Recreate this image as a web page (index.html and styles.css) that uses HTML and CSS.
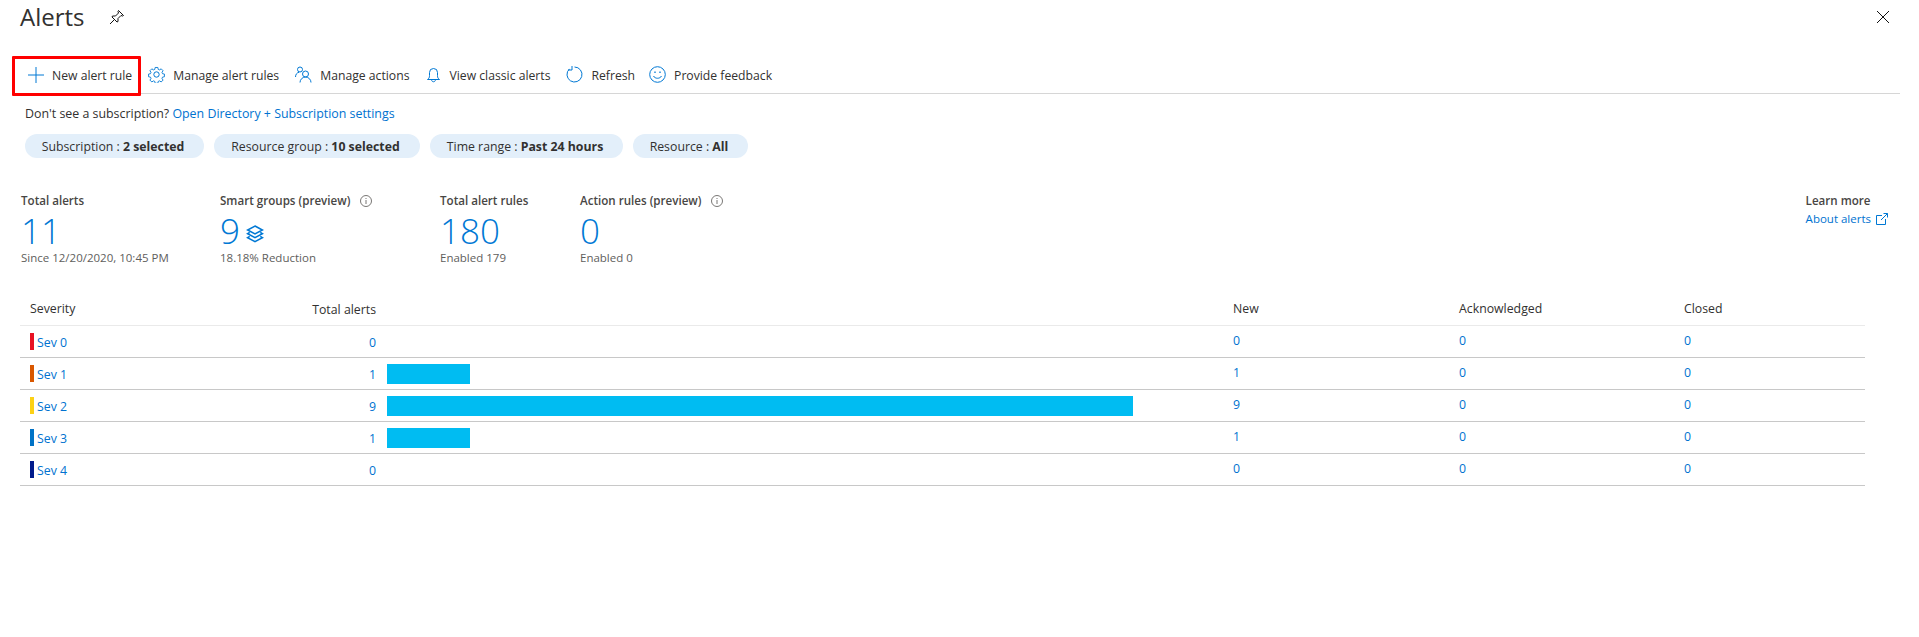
FILE: index.html
```html
<!DOCTYPE html>
<html lang="en">

<head>
    <meta charset="UTF-8">
    <title>Alerts</title>
    <link rel="stylesheet" href="styles.css">
</head>

<body>

    <div class="header">
        <h1>Alerts</h1>
        <svg class="pin" width="16" height="16" viewBox="0 0 16 16" fill="none" stroke="#111" stroke-width="1">
            <path d="M9.500 1.500 14.500 6.500 13.500 7 12 6.500 9 9.500 9 12.500 8 13 3 8 3.500 7 6.500 7 9.500 4 9 2.500Z" />
            <path d="M5.500 10.500 1 15" />
        </svg>
        <svg class="close" width="14" height="14" viewBox="0 0 14 14" stroke="#111" stroke-width="1">
            <path d="M1 1 13 13M13 1 1 13" />
        </svg>
    </div>

    <div class="toolbar">
        <div class="tool tool-new">
            <svg width="16" height="16" viewBox="0 0 16 16" stroke="#0078d4" stroke-width="1">
                <path d="M8 0V16M0 8H16" />
            </svg>
            <span>New alert rule</span>
        </div>
        <div class="tool">
            <svg width="17" height="17" viewBox="0 0 17 17" fill="none" stroke="#0078d4" stroke-width="1">
                <circle cx="8.500" cy="8.500" r="2.700" />
                <path d="M7 .7h3l.4 2.100 1.500.6 1.800-1.200 2.100 2.100-1.200 1.800.6 1.500 2.100.4v3l-2.100.4-.6 1.500 1.200 1.800-2.100 2.100-1.800-1.200-1.500.6-.4 2.100H7l-.4-2.100-1.500-.6-1.800 1.200-2.100-2.100 1.200-1.800-.6-1.500-2.100-.4v-3l2.100-.4.6-1.500-1.200-1.800 2.100-2.100 1.800 1.200 1.500-.6z" transform="translate(.85 .85) scale(.9)" stroke-linejoin="round" />
            </svg>
            <span>Manage alert rules</span>
        </div>
        <div class="tool">
            <svg width="17" height="17" viewBox="0 0 17 17" fill="none" stroke="#0078d4" stroke-width="1">
                <circle cx="5" cy="3.500" r="2.500" />
                <circle cx="10.500" cy="8" r="3" />
                <path d="M.5 11c0-2.500 1.500-4.500 3.500-4.700M5 16.500c0-3 2.500-5.500 5.500-5.500s5.500 2.500 5.500 5.500" />
            </svg>
            <span>Manage actions</span>
        </div>
        <div class="tool tool-bell">
            <svg width="13" height="16" viewBox="0 0 13 16" fill="none" stroke="#0078d4" stroke-width="1">
                <path d="M.5 12.500c1.500-1 2-2 2-4V5.500a4 4 0 0 1 8 0v3c0 2 .5 3 2 4Z" />
                <path d="M4.500 12.500c0 3 4 3 4 0" />
            </svg>
            <span>View classic alerts</span>
        </div>
        <div class="tool">
            <svg width="17" height="17" viewBox="0 0 17 17" fill="none" stroke="#0078d4" stroke-width="1">
                <path d="M8.500 1A7.500 7.500 0 1 1 3.500 2.900" />
                <path d="M6 0V4H2" />
            </svg>
            <span>Refresh</span>
        </div>
        <div class="tool tool-smile">
            <svg width="17" height="17" viewBox="0 0 17 17" fill="none" stroke="#0078d4" stroke-width="1">
                <circle cx="8.500" cy="8.500" r="7.800" />
                <path d="M4.500 10c1.500 3 6.500 3 8 0" />
                <path d="M6 5.500v1.500M11 5.500v1.500" stroke-width="1.300" />
            </svg>
            <span>Provide feedback</span>
        </div>
    </div>

    <p class="note">Don't see a subscription? <a href="#">Open Directory + Subscription settings</a></p>

    <div class="pills">
        <span class="pill pill-sub">Subscription : <b>2 selected</b></span>
        <span class="pill pill-group">Resource group : <b>10 selected</b></span>
        <span class="pill pill-time">Time range : <b>Past 24 hours</b></span>
        <span class="pill pill-res">Resource : <b>All</b></span>
    </div>

    <div class="stats">
        <div class="stat">
            <h4>Total alerts</h4>
            <div class="num">11</div>
            <div class="sub">Since 12/20/2020, 10:45 PM</div>
        </div>
        <div class="stat">
            <h4>Smart groups (preview)
                <svg class="info" width="12" height="12" viewBox="0 0 12 12" fill="none" stroke="#797775">
                    <circle cx="6" cy="6" r="5.500" />
                    <path d="M6 5V9M6 3V4" />
                </svg>
            </h4>
            <div class="num">9
                <svg class="stack" width="18" height="18" viewBox="0 0 17 17" fill="none" stroke="#0078d4" stroke-width="1.500">
                    <path d="M8.500 1 15.500 4.700 8.500 8.400 1.500 4.700Z" />
                    <path d="M3.500 7 1.500 8.300 8.500 12 15.500 8.300 13.500 7" />
                    <path d="M3.500 10.700 1.500 12 8.500 15.700 15.500 12 13.500 10.700" />
                </svg>
            </div>
            <div class="sub">18.18% Reduction</div>
        </div>
        <div class="stat">
            <h4>Total alert rules</h4>
            <div class="num">180</div>
            <div class="sub">Enabled 179</div>
        </div>
        <div class="stat">
            <h4>Action rules (preview)
                <svg class="info" width="12" height="12" viewBox="0 0 12 12" fill="none" stroke="#797775">
                    <circle cx="6" cy="6" r="5.500" />
                    <path d="M6 5V9M6 3V4" />
                </svg>
            </h4>
            <div class="num">0</div>
            <div class="sub">Enabled 0</div>
        </div>
        <div class="learn">
            <h4>Learn more</h4>
            <a href="#">About alerts
                <svg width="12" height="12" viewBox="0 0 12 12" fill="none" stroke="#0078d4">
                    <path d="M6 2.500H.5V11.500H9.500V6M5 7 11.500 .5M7.500 .5H11.500V4.500" />
                </svg>
            </a>
        </div>
    </div>

    <div class="table">
        <div class="row head">
            <div class="sev-name">Severity</div>
            <div class="total">Total alerts</div>
            <div></div>
            <div>New</div>
            <div>Acknowledged</div>
            <div>Closed</div>
        </div>
        <div class="row">
            <div class="sev-name"><i class="sev sev0"></i><a href="#">Sev 0</a></div>
            <div class="total"><a href="#">0</a></div>
            <div></div>
            <div class="val"><a href="#">0</a></div>
            <div class="val"><a href="#">0</a></div>
            <div class="val"><a href="#">0</a></div>
        </div>
        <div class="row">
            <div class="sev-name"><i class="sev sev1"></i><a href="#">Sev 1</a></div>
            <div class="total"><a href="#">1</a></div>
            <div><div class="bar" style="width: 83px"></div></div>
            <div class="val"><a href="#">1</a></div>
            <div class="val"><a href="#">0</a></div>
            <div class="val"><a href="#">0</a></div>
        </div>
        <div class="row">
            <div class="sev-name"><i class="sev sev2"></i><a href="#">Sev 2</a></div>
            <div class="total"><a href="#">9</a></div>
            <div><div class="bar" style="width: 746px"></div></div>
            <div class="val"><a href="#">9</a></div>
            <div class="val"><a href="#">0</a></div>
            <div class="val"><a href="#">0</a></div>
        </div>
        <div class="row">
            <div class="sev-name"><i class="sev sev3"></i><a href="#">Sev 3</a></div>
            <div class="total"><a href="#">1</a></div>
            <div><div class="bar" style="width: 83px"></div></div>
            <div class="val"><a href="#">1</a></div>
            <div class="val"><a href="#">0</a></div>
            <div class="val"><a href="#">0</a></div>
        </div>
        <div class="row">
            <div class="sev-name"><i class="sev sev4"></i><a href="#">Sev 4</a></div>
            <div class="total"><a href="#">0</a></div>
            <div></div>
            <div class="val"><a href="#">0</a></div>
            <div class="val"><a href="#">0</a></div>
            <div class="val"><a href="#">0</a></div>
        </div>
    </div>

</body>

</html>
```

FILE: styles.css
```css
body {
    margin: 0;
    background-color: #fff;
    color: #323130;
    font-family: "Open Sans", "Noto Sans", sans-serif;
    font-size: 12.3px;
    line-height: 16px;
}

a {
    color: #0072d0;
    text-decoration: none;
}

.header {
    display: flex;
    align-items: flex-start;
    height: 56px;
    padding: 0 29px 0 20px;
}

.header h1 {
    margin: 0;
    font-size: 24px;
    font-weight: 400;
    line-height: 34px;
}

.header .pin {
    margin: 9px 0 0 24px;
}

.header .close {
    margin: 10px 0 0 auto;
}

.toolbar {
    display: flex;
    align-items: center;
    gap: 16px;
    height: 37px;
    margin: 0 19px 0 20px;
    padding-left: 8px;
    border-bottom: 1px solid #d6d6d6;
    font-size: 12.2px;
}

.tool {
    display: flex;
    align-items: center;
    gap: 8px;
}

.tool span {
    padding-top: 2px;
}

.tool-new {
    position: relative;
}

/* red annotation box */
.tool-new::after {
    content: "";
    position: absolute;
    top: -10px;
    left: -16px;
    width: 123px;
    height: 34px;
    border: 3px solid #f00;
    border-radius: 1px;
}

.tool-bell {
    gap: 9px;
    margin-left: 2px;
}

.tool-smile {
    margin-left: -2px;
}

.note {
    margin: 12px 0 0 25px;
    font-size: 12.4px;
}

.pills {
    display: flex;
    gap: 10px;
    margin: 12px 0 0 25px;
}

.pill {
    box-sizing: border-box;
    height: 24px;
    padding: 1px 3px 0 0;
    border-radius: 12px;
    background-color: #e3effa;
    line-height: 24px;
    text-align: center;
}

.pill-sub { width: 179px; }
.pill-group { width: 206px; }
.pill-time { width: 193px; }
.pill-res { width: 115px; }

.stats {
    display: grid;
    grid-template-columns: 199px 220px 140px 1fr auto;
    margin-top: 35px;
    padding: 0 31px 0 21px;
}

.stat h4,
.learn h4 {
    margin: 0;
    font-size: 11.6px;
    font-weight: 600;
    color: #484644;
}

.info {
    margin-left: 7px;
    vertical-align: -2px;
}

.num {
    width: fit-content;
    margin-top: 4px;
    height: 35px;
    color: #0078d4;
    font-size: 35px;
    font-weight: 300;
    line-height: 35px;
}

.stack {
    margin-left: -3px;
    vertical-align: 1px;
}

.sub {
    margin-top: 2px;
    font-size: 11.5px;
    color: #605e5c;
}

.learn a {
    display: block;
    margin-top: 2px;
    font-size: 11.5px;
}

.learn svg {
    margin-left: 2px;
    vertical-align: -2px;
}

.table {
    margin: 26px 54px 0 20px;
}

.row {
    display: grid;
    grid-template-columns: 200px 167px 846px 226px 225px 181px;
    align-items: center;
    height: 31px;
    border-bottom: 1px solid #c8c8c8;
}

.row.head {
    height: 33px;
    border-bottom-color: #eaeaea;
}

.sev-name {
    display: flex;
    align-items: center;
    padding-left: 10px;
}

.sev-name a {
    padding-top: 2px;
}

.sev {
    width: 4px;
    height: 17px;
    margin-right: 3px;
}

.sev0 { background-color: #e81123; }
.sev1 { background-color: #d95700; }
.sev2 { background-color: #fcd116; }
.sev3 { background-color: #0072c6; }
.sev4 { background-color: #001a8c; }

.total {
    padding-top: 2px;
    padding-right: 11px;
    text-align: right;
}

.bar {
    height: 20px;
    background-color: #00bcf2;
}

.val {
    margin-top: -2px;
}
```
